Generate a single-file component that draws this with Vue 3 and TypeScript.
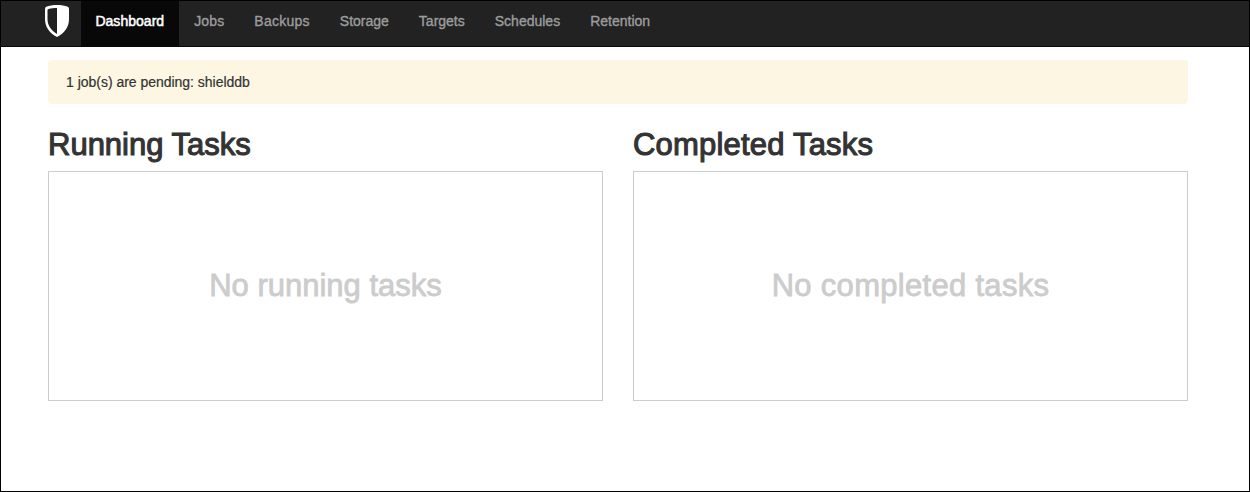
<script setup lang="ts">
import { ref } from 'vue'

interface Panel {
  id: string
  title: string
  empty: string
}

const links: string[] = ['Dashboard', 'Jobs', 'Backups', 'Storage', 'Targets', 'Schedules', 'Retention']
const active = ref('Dashboard')
const panels: Panel[] = [
  { id: 'running', title: 'Running Tasks', empty: 'No running tasks' },
  { id: 'completed', title: 'Completed Tasks', empty: 'No completed tasks' },
]
</script>

<template>
  <div class="page">
    <nav class="navbar">
      <svg class="brand" viewBox="0 0 24 32" aria-label="Shield">
        <path
          fill="#fff"
          fill-rule="evenodd"
          d="M12 0C8 0 4 .7 1.300 1.700Q0 2.300 0 4V14C0 22 4.500 28 12 32C19.500 28 24 22 24 14V4Q24 2.300 22.700 1.700C20 .700 16 0 12 0ZM12 3V29C6 25 2.500 20.500 2.500 14V5.200Q2.500 4.300 3.500 4C6 3.300 9 3 12 3Z"
        />
      </svg>
      <ul class="menu">
        <li v-for="link in links" :key="link">
          <a class="link" :class="[link.toLowerCase(), { active: link === active }]" @click="active = link">{{ link }}</a>
        </li>
      </ul>
    </nav>
    <main class="content">
      <div class="notice">1 job(s) are pending: shielddb</div>
      <div class="columns">
        <section v-for="panel in panels" :key="panel.id" :class="panel.id">
          <h2><span>{{ panel.title }}</span></h2>
          <div class="box"><span>{{ panel.empty }}</span></div>
        </section>
      </div>
    </main>
  </div>
</template>

<style>
body {
  margin: 0;
}
</style>

<style scoped>
.page {
  box-sizing: border-box;
  height: 492px;
  border: 1px solid #000;
  background: #fff;
  color: #333;
  font: 14px/20px 'Liberation Sans', Arial, sans-serif;
  overflow: hidden;
}
.navbar {
  box-sizing: border-box;
  display: flex;
  height: 46px;
  padding-left: 44px;
  background: #222;
  border-bottom: 1px solid #080808;
}
.brand {
  width: 24px;
  height: 32px;
  margin: 4px 12px 0 0;
}
.menu {
  display: flex;
  margin: 0;
  padding: 0;
  list-style: none;
}
.link {
  box-sizing: border-box;
  display: block;
  height: 45px;
  padding: 10px 15px;
  color: #9d9d9d;
  -webkit-text-stroke: 0.35px currentColor;
  cursor: pointer;
}
.link.dashboard {
  padding: 10px 15px 10px 14.4px;
  letter-spacing: 0.03px;
}
.link.jobs {
  letter-spacing: 0.15px;
}
.link.backups {
  letter-spacing: 0.25px;
}
.link.active {
  background: #080808;
  color: #fff;
  -webkit-text-stroke-width: 0.5px;
}
.content {
  width: 1140px;
  margin: 13px 0 0 47px;
}
.notice {
  box-sizing: border-box;
  height: 44px;
  padding: 12px 18px;
  border-radius: 4px;
  background: #fdf6e2;
  letter-spacing: -0.02px;
  -webkit-text-stroke: 0.2px currentColor;
}
.columns {
  display: grid;
  grid-template-columns: 1fr 1fr;
  gap: 30px;
  margin-top: 24px;
}
h2 {
  margin: 0 0 10px;
  font-size: 31px;
  font-weight: 400;
  line-height: 33px;
  -webkit-text-stroke: 1.1px currentColor;
}
.completed h2 {
  letter-spacing: 0.2px;
}
.box {
  box-sizing: border-box;
  display: flex;
  align-items: center;
  justify-content: center;
  height: 230px;
  border: 1px solid #ccc;
  color: #ccc;
  font-size: 31px;
  -webkit-text-stroke: 0.8px currentColor;
}
.completed .box {
  letter-spacing: 0.3px;
}
</style>
